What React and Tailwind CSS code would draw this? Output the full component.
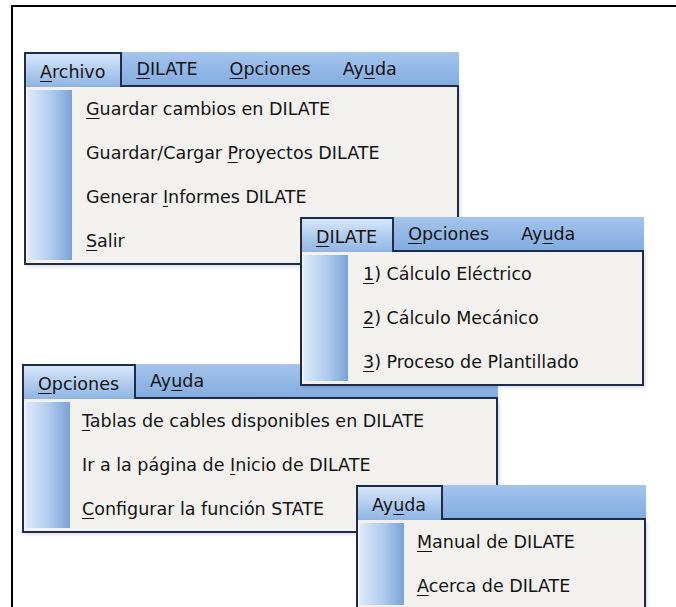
import React from 'react';

// "&" marks the mnemonic letter that gets underlined
function Label({ text }) {
    const i = text.indexOf('&');
    if (i < 0) return <span>{text}</span>;
    return (
        <span className="whitespace-pre">
            {text.slice(0, i)}
            <u className="underline-offset-[3px] decoration-1">{text[i + 1]}</u>
            {text.slice(i + 2)}
        </span>
    );
}

function Menu({ className, tabs, items, textPad }) {
    const [active, ...rest] = tabs;
    return (
        <div className={`absolute flex flex-col ${className}`}>
            <div className="flex h-[35px]">
                <div className="flex items-center pt-[3px] pl-[14px] pr-[15px] border-2 border-b-0 border-[#1d2b4c] bg-gradient-to-b from-[#d6e6f9] via-[#b2cdee] to-[#8fb4e3]">
                    <Label text={active} />
                </div>
                <div className="flex-1 flex items-center gap-[32px] pt-[1px] pl-[14px] border-b-2 border-[#1d2b4c] bg-gradient-to-b from-[#a3c4ec] to-[#83acdf]">
                    {rest.map(t => (
                        <Label key={t} text={t} />
                    ))}
                </div>
            </div>
            <div className="flex border-2 border-t-0 border-[#1d2b4c] bg-[#f2f1ee] shadow-[2px_2px_3px_rgba(0,0,0,0.12)]">
                <div className="w-[44px] ml-[2px] my-[3px] bg-gradient-to-r from-[#dce9f9] via-[#b3cdef] to-[#7ba2d6]" />
                <div className={`flex-1 flex flex-col ${textPad}`}>
                    {items.map(it => (
                        <div key={it} className="h-[44px] flex items-center">
                            <Label text={it} />
                        </div>
                    ))}
                </div>
            </div>
        </div>
    );
}

export default function App() {
    return (
        <div className="relative w-[676px] h-[607px] overflow-hidden bg-white text-[#141414] text-[17.5px] font-['DejaVu_Sans',sans-serif]">
            <div className="absolute left-[11px] top-[5px] w-[700px] h-[640px] border-l-2 border-t-2 border-black" />

            <Menu
                className="left-[24px] top-[52px] w-[435px]"
                textPad="pl-[14px]"
                tabs={['&Archivo', '&DILATE', '&Opciones', 'Ay&uda']}
                items={[
                    '&Guardar cambios en DILATE',
                    'Guardar/Cargar &Proyectos DILATE',
                    'Generar &Informes DILATE',
                    '&Salir',
                ]}
            />

            <Menu
                className="left-[356px] top-[485px] w-[290px] z-30"
                textPad="pl-[13px]"
                tabs={['Ay&uda']}
                items={['&Manual de DILATE', '&Acerca de DILATE']}
            />

            <Menu
                className="left-[22px] top-[364px] w-[476px] z-10"
                textPad="pl-[12px]"
                tabs={['&Opciones', 'Ay&uda']}
                items={[
                    '&Tablas de cables disponibles en DILATE',
                    'Ir a la página de &Inicio de DILATE',
                    '&Configurar la función STATE',
                ]}
            />

            <Menu
                className="left-[300px] top-[217px] w-[344px] z-20"
                textPad="pl-[15px]"
                tabs={['&DILATE', '&Opciones', 'Ay&uda']}
                items={[
                    '&1) Cálculo Eléctrico',
                    '&2) Cálculo Mecánico',
                    '&3) Proceso de Plantillado',
                ]}
            />
        </div>
    );
}
